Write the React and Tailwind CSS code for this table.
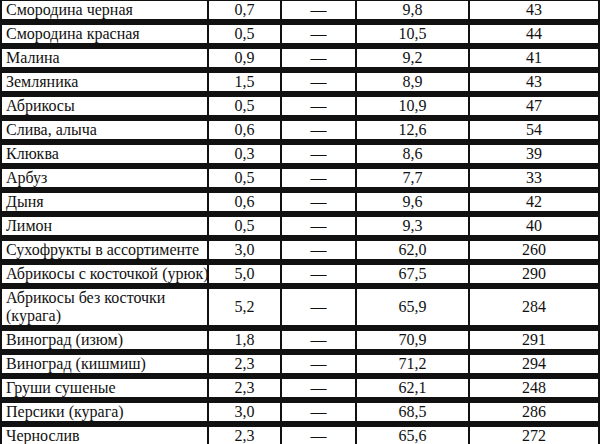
const ROWS = [
  ["Смородина черная", "0,7", "9,8", "43"],
  ["Смородина красная", "0,5", "10,5", "44"],
  ["Малина", "0,9", "9,2", "41"],
  ["Земляника", "1,5", "8,9", "43"],
  ["Абрикосы", "0,5", "10,9", "47"],
  ["Слива, алыча", "0,6", "12,6", "54"],
  ["Клюква", "0,3", "8,6", "39"],
  ["Арбуз", "0,5", "7,7", "33"],
  ["Дыня", "0,6", "9,6", "42"],
  ["Лимон", "0,5", "9,3", "40"],
  ["Сухофрукты в ассортименте", "3,0", "62,0", "260"],
  ["Абрикосы с косточкой (урюк)", "5,0", "67,5", "290"],
  ["Абрикосы без косточки (курага)", "5,2", "65,9", "284", true],
  ["Виноград (изюм)", "1,8", "70,9", "291"],
  ["Виноград (кишмиш)", "2,3", "71,2", "294"],
  ["Груши сушеные", "2,3", "62,1", "248"],
  ["Персики (курага)", "3,0", "68,5", "286"],
  ["Чернослив", "2,3", "65,6", "272"],
];

// serif face like the printed table (Times metrics)
const face = "[font-family:'Liberation_Serif'] text-[16px] leading-[18px] text-[#111]";

function Row({ name, protein, carbs, kcal, tall }) {
  const h = tall ? "h-[36px]" : "h-[18px]";
  const cell = `bg-white flex items-center justify-center ${h}`;
  return (
    <div className="flex gap-[2px] px-[2px] shrink-0">
      <div className={`bg-white w-[205px] pl-[4px] pr-[2px] flex ${tall ? "items-start" : "items-center"} ${h}`}>
        <span className={`${face} ${tall ? "w-[170px]" : "whitespace-nowrap"}`}>{name}</span>
      </div>
      <div className={`${cell} w-[71px]`}>
        <span className={face}>{protein}</span>
      </div>
      <div className={`${cell} w-[73px]`}>
        <span className={face}>—</span>
      </div>
      <div className={`${cell} w-[111px]`}>
        <span className={face}>{carbs}</span>
      </div>
      <div className={`${cell} w-[128px]`}>
        <span className={face}>{kcal}</span>
      </div>
    </div>
  );
}

export default function App() {
  return (
    <div className="w-[600px] h-[444px] overflow-hidden bg-[#111]">
      <div className="flex flex-col gap-[6px] pt-px">
        {ROWS.map(([name, p, c, k, tall]) => (
          <Row key={name} name={name} protein={p} carbs={c} kcal={k} tall={tall} />
        ))}
      </div>
    </div>
  );
}
